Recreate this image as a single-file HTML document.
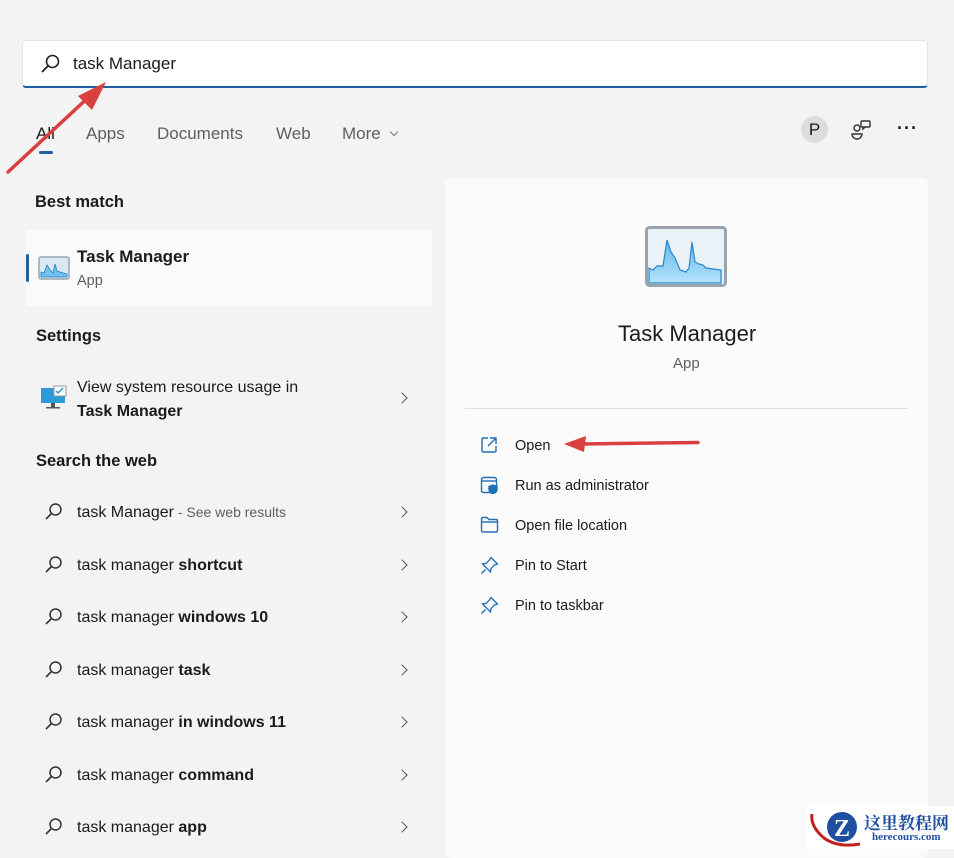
<!DOCTYPE html>
<html><head><meta charset="utf-8"><style>
*{margin:0;padding:0;box-sizing:border-box}
body{width:954px;height:849px;overflow:hidden;background:#f3f3f3;font-family:"Liberation Sans",sans-serif;color:#1b1b1b;position:relative}
.a{position:absolute;white-space:nowrap}
.t{font-size:16px}
.g{color:#5f5f5f}
.chev{position:absolute;left:398px;width:8px;height:8px;border-right:1.5px solid #555;border-top:1.5px solid #555;transform:rotate(45deg)}
b{font-weight:bold;color:#1b1b1b}
.mi{position:absolute;left:480px}
.ml{position:absolute;left:515px;font-size:14.5px;color:#1b1b1b}
</style></head><body>
<div class="a" style="left:22px;top:40px;width:906px;height:48px;background:#fff;border:1px solid #e5e5e5;border-bottom:2px solid #1f5f9f;border-radius:4px"></div>
<svg class="a" style="left:40px;top:53px" width="22" height="22" viewBox="0 0 22 22"><circle cx="12.5" cy="8.5" r="6" fill="none" stroke="#222" stroke-width="1.6"/><line x1="8.2" y1="12.8" x2="2.5" y2="18.5" stroke="#222" stroke-width="1.8" stroke-linecap="round"/></svg>
<div class="a" style="left:73px;top:54px;font-size:17px">task Manager</div>
<div class="a g" style="left:36px;top:124px;font-size:17px;color:#1b1b1b">All</div>
<div class="a" style="left:39px;top:151px;width:14px;height:3px;border-radius:2px;background:#1f5f9f"></div>
<div class="a g" style="left:86px;top:124px;font-size:17px">Apps</div>
<div class="a g" style="left:157px;top:124px;font-size:17px">Documents</div>
<div class="a g" style="left:276px;top:124px;font-size:17px">Web</div>
<div class="a g" style="left:342px;top:124px;font-size:17px">More</div>
<div class="a" style="left:391px;top:129px;width:6px;height:6px;border-right:1.3px solid #777;border-bottom:1.3px solid #777;transform:rotate(45deg)"></div>
<div class="a" style="left:801px;top:116px;width:27px;height:27px;border-radius:50%;background:#dcdcdc;font-size:17px;text-align:center;line-height:27px">P</div>
<svg class="a" style="left:849px;top:118px" width="24" height="24" viewBox="0 0 24 24" fill="none" stroke="#333" stroke-width="1.4"><circle cx="8" cy="10" r="3"/><path d="M3 16h10c0 3-2.5 5-5 5s-5-2-5-5z"/><rect x="12" y="3" width="9" height="6" rx="1"/><path d="M14 9v2l2-2"/></svg>
<div class="a" style="left:897px;top:118px;font-size:18px;letter-spacing:1px;font-weight:bold">···</div>
<svg class="a" style="left:0;top:80px" width="120" height="100"><line x1="8" y1="92" x2="92" y2="14" stroke="#d9403f" stroke-width="3.5" stroke-linecap="round"/><polygon points="106,2 78,16 92,30" fill="#d9403f"/></svg>
<div class="a" style="left:35px;top:193px;font-size:16.5px;font-weight:bold">Best match</div>
<div class="a" style="left:26px;top:230px;width:406px;height:76px;background:#fafafa;border-radius:4px"></div>
<div class="a" style="left:26px;top:254px;width:3px;height:28px;background:#1f5f9f;border-radius:2px"></div>
<svg class="a" style="left:38px;top:256px" width="32" height="24" viewBox="0 0 32 24"><rect x="1" y="1" width="30" height="22" rx="2" fill="#d8e9f5" stroke="#9aa6b0" stroke-width="1.5"/><path d="M3 20 L3 16 L6 17 L9 9 L12 14 L15 17 L17 8 L19 15 L22 16 L29 18 L29 21 L3 21Z" fill="#6fc0ef" stroke="#2a7fc0" stroke-width="0.8"/></svg>
<div class="a" style="left:77px;top:247px;font-size:17px;font-weight:bold">Task Manager</div>
<div class="a g" style="left:77px;top:273px;font-size:14.5px">App</div>
<div class="a" style="left:36px;top:327px;font-size:16.5px;font-weight:bold">Settings</div>
<svg class="a" style="left:40px;top:385px" width="28" height="26" viewBox="0 0 28 26"><rect x="1" y="3" width="24" height="15" fill="#2e9ad9"/><rect x="14" y="1" width="12" height="10" fill="#fff" stroke="#999"/><path d="M16 6l2 2 5-5" stroke="#2e9ad9" fill="none" stroke-width="1.5"/><rect x="11" y="18" width="4" height="4" fill="#555"/><rect x="6" y="22" width="14" height="1.5" fill="#555"/></svg>
<div class="a t" style="left:77px;top:379px">View system resource usage in</div>
<div class="a t" style="left:77px;top:403px;font-weight:bold">Task Manager</div>
<div class="chev" style="top:394px"></div>
<div class="a" style="left:36px;top:452px;font-size:16.5px;font-weight:bold">Search the web</div>
<div id="web"></div>
<div class="a" style="left:445px;top:178px;width:483px;height:680px;background:#fbfbfb;border-radius:6px"></div>
<svg class="a" style="left:645px;top:226px" width="82" height="62" viewBox="0 0 82 62"><rect x="1.5" y="1.5" width="79" height="58" rx="3" fill="#eaf2f8" stroke="#9aa3ab" stroke-width="3"/><defs><linearGradient id="gr" x1="0" y1="0" x2="0" y2="1"><stop offset="0" stop-color="#5db8ec"/><stop offset="1" stop-color="#b6e2fa"/></linearGradient></defs><path d="M4 42 L8 44 L12 40 L18 40 L22 14 L26 26 L30 32 L35 44 L41 46 L44 42 L47 16 L50 36 L54 38 L58 39 L61 42 L76 44 L76 57 L4 57Z" fill="url(#gr)" stroke="#2a86c8" stroke-width="1.2"/></svg>
<div class="a" style="left:618px;top:321px;font-size:22px">Task Manager</div>
<div class="a g" style="left:673px;top:355px;font-size:15px">App</div>
<div class="a" style="left:465px;top:408px;width:443px;height:1px;background:#e1e1e1"></div>
<svg class="mi" style="top:436px" width="18" height="18" viewBox="0 0 18 18" fill="none" stroke="#1f6fb5" stroke-width="1.4"><path d="M8 2H3.5Q2 2 2 3.5v11Q2 16 3.5 16h11q1.5 0 1.5-1.5V10"/><path d="M10 2h6v6M16 2l-8 8"/></svg>
<div class="ml" style="top:438px">Open</div>
<svg class="a" style="left:560px;top:434px" width="145" height="20"><line x1="20" y1="10" x2="138" y2="8.5" stroke="#d9403f" stroke-width="3.5" stroke-linecap="round"/><polygon points="4,10 26,2 24,18" fill="#d9403f"/></svg>
<svg class="mi" style="top:476px" width="20" height="18" viewBox="0 0 20 18" fill="none" stroke="#1f6fb5" stroke-width="1.4"><rect x="1.5" y="1.5" width="15" height="15" rx="2"/><path d="M1.5 5h15"/><path d="M13 9l4 1.5v3c0 2-2 3.5-4 4-2-.5-4-2-4-4v-3z" fill="#1f6fb5"/></svg>
<div class="ml" style="top:478px">Run as administrator</div>
<svg class="mi" style="top:516px" width="19" height="17" viewBox="0 0 19 17" fill="none" stroke="#1f6fb5" stroke-width="1.4"><path d="M1.5 3Q1.5 1.5 3 1.5h4l2 2h7Q17.5 3.5 17.5 5v9.5Q17.5 16 16 16H3Q1.5 16 1.5 14.5z"/><path d="M1.5 6h16"/></svg>
<div class="ml" style="top:518px">Open file location</div>
<svg class="mi" style="top:556px" width="19" height="19" viewBox="0 0 19 19" fill="none" stroke="#1f6fb5" stroke-width="1.3"><path d="M11 1.5l6.5 6.5-3 1-3.5 3.5-.5 3.5-8-8 3.5-.5L9.5 4z"/><path d="M5.5 13.5L1.5 17.5"/></svg>
<div class="ml" style="top:558px">Pin to Start</div>
<svg class="mi" style="top:596px" width="19" height="19" viewBox="0 0 19 19" fill="none" stroke="#1f6fb5" stroke-width="1.3"><path d="M11 1.5l6.5 6.5-3 1-3.5 3.5-.5 3.5-8-8 3.5-.5L9.5 4z"/><path d="M5.5 13.5L1.5 17.5"/></svg>
<div class="ml" style="top:598px">Pin to taskbar</div>
<div class="a" style="left:806px;top:806px;width:148px;height:43px;background:#fff"></div>
<svg class="a" style="left:808px;top:806px" width="60" height="43" viewBox="0 0 60 43"><path d="M4 8 Q2 20 16 32 Q30 42 52 38" stroke="#c0221d" stroke-width="3" fill="none"/><circle cx="34" cy="21" r="15" fill="#1f4fa0"/><text x="26" y="30" font-family="Liberation Serif,serif" font-size="24" font-weight="bold" fill="#fff">Z</text></svg>
<div class="a" style="left:864px;top:809px;font-family:'Liberation Serif','Noto Serif CJK SC',serif;font-size:17px;font-weight:bold;color:#1f4fa0">这里教程网</div>
<div class="a" style="left:872px;top:831px;font-family:'Liberation Serif',serif;font-size:11px;font-weight:bold;color:#1f4fa0">herecours.com</div>
<script>
var rows=[["task Manager",'<span class="g" style="font-size:14px"> - See web results</span>',512],["task manager ","<b>shortcut</b>",565],["task manager ","<b>windows 10</b>",617],["task manager ","<b>task</b>",670],["task manager ","<b>in windows 11</b>",722],["task manager ","<b>command</b>",775],["task manager ","<b>app</b>",827]];
var h="";rows.forEach(function(r){var y=r[2];
h+='<svg class="a" style="left:44px;top:'+(y-10)+'px" width="20" height="20" viewBox="0 0 20 20"><circle cx="11.5" cy="7.5" r="5.5" fill="none" stroke="#333" stroke-width="1.5"/><line x1="7.5" y1="11.5" x2="2.5" y2="16.5" stroke="#333" stroke-width="1.6" stroke-linecap="round"/></svg>';
h+='<div class="a t" style="left:77px;top:'+(y-8)+'px">'+r[0]+r[1]+'</div><div class="chev" style="top:'+(y-4)+'px"></div>';});
document.getElementById("web").innerHTML=h;
</script>
</body></html>
